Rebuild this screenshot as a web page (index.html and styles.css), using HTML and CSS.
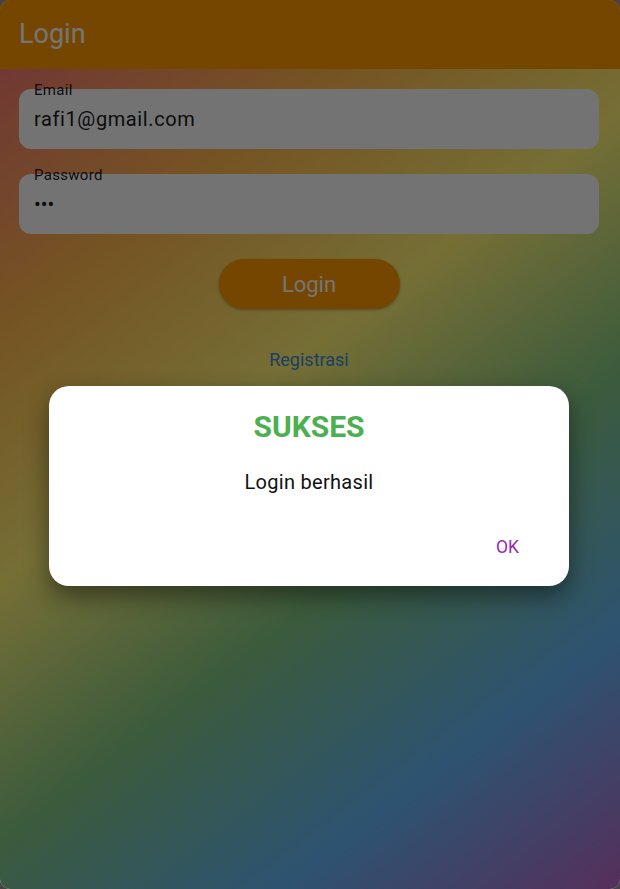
FILE: index.html
```html
<!DOCTYPE html>
<html lang="id">
<head>
<meta charset="utf-8">
<title>Login</title>
<link rel="stylesheet" href="styles.css">
</head>
<body>
<div class="screen">
  <header class="appbar">
    <h1 class="appbar-title">Login</h1>
  </header>
  <main class="content">
    <div class="form">
      <div class="field">
        <span class="field-label">Email</span>
        <span class="field-value">rafi1@gmail.com</span>
      </div>
      <div class="field">
        <span class="field-label">Password</span>
        <span class="field-value field-dots">•••</span>
      </div>
      <button class="login-btn" type="button">Login</button>
      <a class="link-btn" href="#">Registrasi</a>
    </div>
  </main>
  <div class="scrim"></div>
  <div class="dialog" role="dialog">
    <h2 class="dialog-title">SUKSES</h2>
    <p class="dialog-text">Login berhasil</p>
    <div class="dialog-actions">
      <button class="ok-btn" type="button">OK</button>
    </div>
  </div>
</div>
</body>
</html>
```

FILE: styles.css
```css
html, body {
  margin: 0;
  padding: 0;
  width: 620px;
  height: 889px;
  background: #444444;
  overflow: hidden;
}

.screen {
  position: relative;
  width: 620px;
  height: 889px;
  border-radius: 10px;
  overflow: hidden;
  display: flex;
  flex-direction: column;
  font-family: Roboto, "Noto Sans", sans-serif;
}

.appbar {
  height: 69px;
  flex: none;
  background: #ff9800;
  display: flex;
  align-items: center;
  padding: 0 19px;
}

.appbar-title {
  margin: 0;
  font-size: 27px;
  font-weight: 400;
  color: #ffffff;
  line-height: 1;
}

.content {
  flex: 1;
  padding: 20px 21px 20px 19px;
  background:
    linear-gradient(142.9deg,
      rgba(244, 67, 54, 0.7) 0%,
      rgba(255, 152, 0, 0.7) 20%,
      rgba(255, 235, 59, 0.7) 40%,
      rgba(76, 175, 80, 0.7) 60%,
      rgba(33, 150, 243, 0.7) 80%,
      rgba(156, 39, 176, 0.7) 100%),
    #ffffff;
}

.form {
  display: flex;
  flex-direction: column;
  gap: 25px;
}

.field {
  position: relative;
  height: 60px;
  border-radius: 12px;
  background: #fafafa;
  display: flex;
  align-items: center;
  padding: 0 15px;
}

.field-label {
  position: absolute;
  left: 15px;
  top: -8px;
  font-size: 15px;
  letter-spacing: 0.3px;
  color: rgba(0, 0, 0, 0.9);
}

.field-value {
  font-size: 20px;
  letter-spacing: 0.6px;
  color: #1a1a1a;
  padding-bottom: 1px;
}

.field-dots {
  font-size: 20px;
  letter-spacing: 0;
  padding-top: 0;
}

.login-btn {
  align-self: center;
  width: 181px;
  height: 50px;
  border: none;
  border-radius: 25px;
  background: #ff9800;
  color: #ffffff;
  font-family: inherit;
  font-size: 22px;
  box-shadow: 0 1px 3px rgba(0, 0, 0, 0.3);
}

.link-btn {
  align-self: center;
  height: 48px;
  display: flex;
  align-items: center;
  padding: 1px 12px 0;
  font-size: 18px;
  color: #3a8ad6;
  text-decoration: none;
}

.scrim {
  position: absolute;
  inset: 0;
  background: rgba(0, 0, 0, 0.54);
}

.dialog {
  position: absolute;
  left: 49px;
  top: 386px;
  width: 520px;
  height: 200px;
  box-sizing: border-box;
  background: #ffffff;
  border-radius: 20px;
  box-shadow: 0 10px 24px rgba(0, 0, 0, 0.45);
  padding: 23px 35px 15px;
  display: flex;
  flex-direction: column;
  align-items: center;
}

.dialog-title {
  margin: 0;
  font-size: 30px;
  line-height: 36px;
  font-weight: 700;
  color: #4caf50;
}

.dialog-text {
  margin: 25px 0 0;
  font-size: 20px;
  line-height: 24px;
  letter-spacing: 0.3px;
  color: #111111;
}

.dialog-actions {
  align-self: stretch;
  margin-top: 27px;
  display: flex;
  justify-content: flex-end;
}

.ok-btn {
  height: 50px;
  border: none;
  background: transparent;
  padding: 1px 15px 0;
  font-family: inherit;
  font-size: 17.5px;
  color: #9c27b0;
}
```
